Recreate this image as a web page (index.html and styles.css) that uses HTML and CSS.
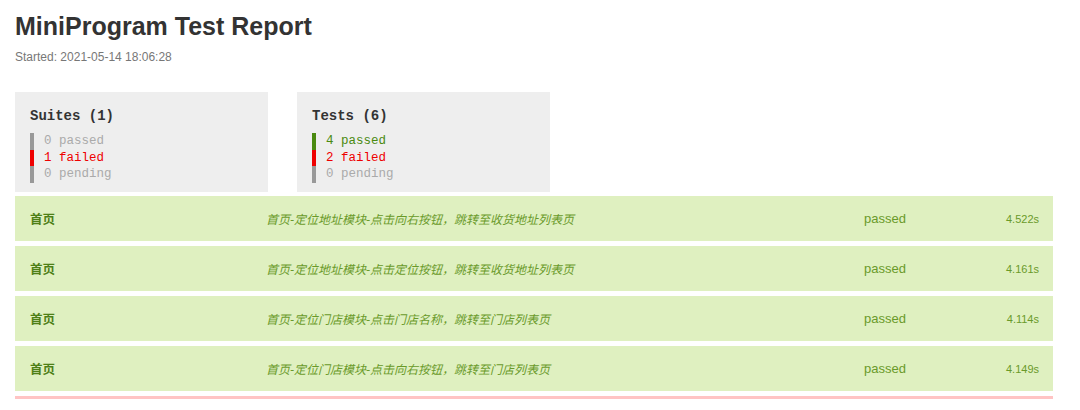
FILE: index.html
```html
<!DOCTYPE html>
<html lang="zh-CN">
<head>
<meta charset="utf-8">
<title>MiniProgram Test Report</title>
<link rel="stylesheet" href="styles.css">
</head>
<body>
<header class="header">
  <h1 class="title">MiniProgram Test Report</h1>
  <div class="started">Started: 2021-05-14 18:06:28</div>
</header>
<section class="summary">
  <div class="box">
    <div class="box-title">Suites (1)</div>
    <div class="stat stat-gray">0 passed</div>
    <div class="stat stat-red">1 failed</div>
    <div class="stat stat-gray">0 pending</div>
  </div>
  <div class="box">
    <div class="box-title">Tests (6)</div>
    <div class="stat stat-green">4 passed</div>
    <div class="stat stat-red">2 failed</div>
    <div class="stat stat-gray">0 pending</div>
  </div>
</section>
<section class="tests">
  <div class="row pass">
    <div class="suite">首页</div>
    <div class="name">首页-定位地址模块-点击向右按钮，跳转至收货地址列表页</div>
    <div class="status">passed</div>
    <div class="dur">4.522s</div>
  </div>
  <div class="row pass">
    <div class="suite">首页</div>
    <div class="name">首页-定位地址模块-点击定位按钮，跳转至收货地址列表页</div>
    <div class="status">passed</div>
    <div class="dur">4.161s</div>
  </div>
  <div class="row pass">
    <div class="suite">首页</div>
    <div class="name">首页-定位门店模块-点击门店名称，跳转至门店列表页</div>
    <div class="status">passed</div>
    <div class="dur">4.114s</div>
  </div>
  <div class="row pass">
    <div class="suite">首页</div>
    <div class="name">首页-定位门店模块-点击向右按钮，跳转至门店列表页</div>
    <div class="status">passed</div>
    <div class="dur">4.149s</div>
  </div>
  <div class="row-fail-edge"></div>
</section>
</body>
</html>
```

FILE: styles.css
```css
html, body {
  margin: 0;
  padding: 0;
  background: #fff;
}
body {
  padding: 0 27px 0 15px;
  font-family: "Liberation Sans", Arial, "Noto Sans CJK SC", sans-serif;
  color: #333;
}
.header {
  padding-top: 11px;
}
.title {
  margin: 0;
  font-size: 25px;
  line-height: 30px;
  font-weight: bold;
  color: #333;
}
.started {
  margin-top: 9px;
  font-size: 12px;
  line-height: 14px;
  color: #777;
}
.summary {
  display: flex;
  gap: 29px;
  margin-top: 28px;
}
.box {
  width: 253px;
  height: 100px;
  box-sizing: border-box;
  background: #eee;
  padding: 16px 15px 0 15px;
  font-family: "Liberation Mono", "Courier New", "Noto Sans CJK SC", monospace;
}
.box-title {
  font-size: 14px;
  font-weight: bold;
  line-height: 16px;
  color: #333;
  margin-bottom: 9px;
}
.stat {
  font-size: 12.5px;
  line-height: 16.5px;
  padding-left: 10px;
  border-left: 4px solid #999;
}
.stat-gray { color: #aaa; border-left-color: #999; }
.stat-red { color: #e00; border-left-color: #e00; }
.stat-green { color: #4a8a10; border-left-color: #4a8a10; }
.tests {
  display: flex;
  flex-direction: column;
  gap: 5px;
  margin-top: 4px;
}
.row {
  display: grid;
  grid-template-columns: 236px 598px 1fr auto;
  align-items: center;
  height: 45px;
  padding: 0 14px 0 15px;
  font-size: 12.5px;
}
.row.pass {
  background: #dff0c0;
  color: #6a9a2a;
}
.row-fail-edge {
  height: 3px;
  background: #ffc4c4;
}
.suite {
  font-weight: bold;
  color: #4e7f16;
}
.name {
  font-style: italic;
  font-size: 12px;
}
.status {
  font-size: 13px;
}
.dur {
  font-size: 11px;
  text-align: right;
}
```
